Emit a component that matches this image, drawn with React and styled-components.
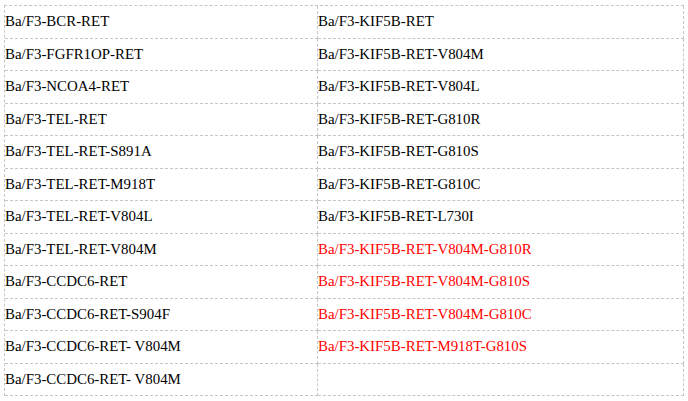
import React from "react";
import styled, { createGlobalStyle } from "styled-components";

const Global = createGlobalStyle`
  html, body { margin: 0; padding: 0; background: #fff; }
  body { font-family: "Liberation Serif", "Times New Roman", serif; }
`;

const Page = styled.div`
  padding: 5px 0 0 4px;
`;

const Grid = styled.div`
  display: grid;
  grid-template-columns: 313px 366px;
  grid-auto-rows: 32.5px;
  border-top: 1px dashed #c6c6c6;
  border-left: 1px dashed #c6c6c6;
  width: max-content;
`;

const Cell = styled.div`
  box-sizing: border-box;
  border-right: 1px dashed #c6c6c6;
  border-bottom: 1px dashed #c6c6c6;
  display: flex;
  align-items: center;
  padding-left: 0;
  font-size: 14.9px;
  color: ${(p) => (p.$red ? "#ff0000" : "#000")};
  white-space: nowrap;
`;

const left = [
  "Ba/F3-BCR-RET",
  "Ba/F3-FGFR1OP-RET",
  "Ba/F3-NCOA4-RET",
  "Ba/F3-TEL-RET",
  "Ba/F3-TEL-RET-S891A",
  "Ba/F3-TEL-RET-M918T",
  "Ba/F3-TEL-RET-V804L",
  "Ba/F3-TEL-RET-V804M",
  "Ba/F3-CCDC6-RET",
  "Ba/F3-CCDC6-RET-S904F",
  "Ba/F3-CCDC6-RET- V804M",
  "Ba/F3-CCDC6-RET- V804M",
];

const right = [
  { t: "Ba/F3-KIF5B-RET" },
  { t: "Ba/F3-KIF5B-RET-V804M" },
  { t: "Ba/F3-KIF5B-RET-V804L" },
  { t: "Ba/F3-KIF5B-RET-G810R" },
  { t: "Ba/F3-KIF5B-RET-G810S" },
  { t: "Ba/F3-KIF5B-RET-G810C" },
  { t: "Ba/F3-KIF5B-RET-L730I" },
  { t: "Ba/F3-KIF5B-RET-V804M-G810R", red: true },
  { t: "Ba/F3-KIF5B-RET-V804M-G810S", red: true },
  { t: "Ba/F3-KIF5B-RET-V804M-G810C", red: true },
  { t: "Ba/F3-KIF5B-RET-M918T-G810S", red: true },
  { t: "" },
];

export default function App() {
  return (
    <Page>
      <Global />
      <Grid>
        {left.map((l, i) => (
          <React.Fragment key={i}>
            <Cell>{l}</Cell>
            <Cell $red={right[i].red}>{right[i].t}</Cell>
          </React.Fragment>
        ))}
      </Grid>
    </Page>
  );
}
